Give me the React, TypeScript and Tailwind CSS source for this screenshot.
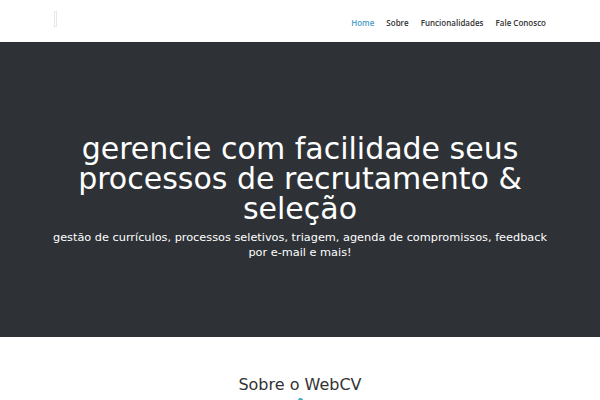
import React from 'react';

const navItems = ['Home', 'Sobre', 'Funcionalidades', 'Fale Conosco'];

export default function App() {
  return (
    <div className="min-h-screen bg-white" style={{ fontFamily: '"DejaVu Sans", sans-serif' }}>
      {/* Header */}
      <header className="h-[42px] bg-white flex items-center justify-between pl-[54px] pr-[54px] shadow-[0_1px_0_rgba(0,0,0,0.1)] relative z-10">
        <div className="w-[3px] h-[16px] border border-gray-200 bg-white -mt-[4px]" />
        <nav className="flex items-center gap-[12px] text-[8px] font-semibold text-[#333] pt-[4px]" style={{ fontFamily: '"Open Sans", sans-serif' }}>
          {navItems.map((item, i) => (
            <a key={item} href="#" className={i === 0 ? 'text-[#4b9cc9]' : 'text-[#333]'}>
              {item}
            </a>
          ))}
        </nav>
      </header>

      {/* Hero */}
      <section className="h-[295px] bg-[#2e3236] flex flex-col items-center justify-center text-white text-center px-[40px] pt-[14px]">
        <h1 className="text-[30px] leading-[30px] font-normal">
          gerencie com facilidade seus<br />processos de recrutamento &amp;<br />seleção
        </h1>
        <p className="text-[11.3px] leading-[15px] mt-[6px] font-medium max-w-[505px]">
          gestão de currículos, processos seletivos, triagem, agenda de compromissos, feedback por e-mail e mais!
        </p>
      </section>

      {/* Sobre */}
      <section className="flex flex-col items-center pt-[38px]">
        <h2 className="text-[16px] text-[#333] leading-[20px]">Sobre o WebCV</h2>
        <div className="w-[5px] h-[5px] rounded-full bg-[#3aa7c9] mt-[3px]" />
      </section>
    </div>
  );
}
